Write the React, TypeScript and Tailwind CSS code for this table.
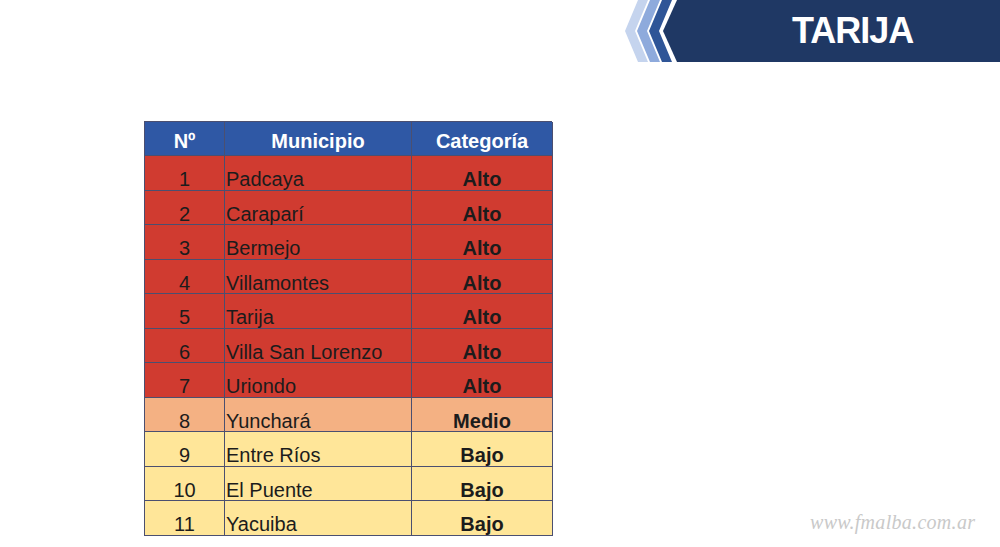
import React from "react";

type Row = { n: number; name: string; cat: string; tone: "alto" | "medio" | "bajo" };

const ROWS: Row[] = [
  { n: 1, name: "Padcaya", cat: "Alto", tone: "alto" },
  { n: 2, name: "Caraparí", cat: "Alto", tone: "alto" },
  { n: 3, name: "Bermejo", cat: "Alto", tone: "alto" },
  { n: 4, name: "Villamontes", cat: "Alto", tone: "alto" },
  { n: 5, name: "Tarija", cat: "Alto", tone: "alto" },
  { n: 6, name: "Villa San Lorenzo", cat: "Alto", tone: "alto" },
  { n: 7, name: "Uriondo", cat: "Alto", tone: "alto" },
  { n: 8, name: "Yunchará", cat: "Medio", tone: "medio" },
  { n: 9, name: "Entre Ríos", cat: "Bajo", tone: "bajo" },
  { n: 10, name: "El Puente", cat: "Bajo", tone: "bajo" },
  { n: 11, name: "Yacuiba", cat: "Bajo", tone: "bajo" },
];

const toneBg = {
  alto: "bg-[#d03b30]",
  medio: "bg-[#f4b183]",
  bajo: "bg-[#ffe699]",
};

function Banner() {
  return (
    <div className="relative h-[63px] w-[375px]">
      <svg className="absolute inset-0" width="375" height="63" viewBox="0 0 375 63">
        <polygon points="13,0 23,0 10,31 23,62 13,62 0,31" fill="#c5d4ee" />
        <polygon points="25,0 35,0 22,31 35,62 25,62 12,31" fill="#8eaadc" />
        <polygon points="37,0 47,0 34,31 47,62 37,62 24,31" fill="#2f5597" />
        <polygon points="52,0 375,0 375,62 52,62 38,31" fill="#1f3864" />
      </svg>
      <div className="relative flex h-[62px] items-center pl-[167px]">
        <span className="font-['Liberation_Sans',Arial,sans-serif] text-[36px] font-bold leading-none tracking-[-1px] text-white">
          TARIJA
        </span>
      </div>
    </div>
  );
}

function Cell({
  children,
  className = "",
}: {
  children: React.ReactNode;
  className?: string;
}) {
  return (
    <div className={`h-[34.5px] border-b border-r border-[#4b4f70] pt-[13px] leading-[20px] whitespace-nowrap ${className}`}>
      {children}
    </div>
  );
}

export default function App() {
  return (
    <div className="relative h-[547px] w-[1000px] overflow-hidden bg-white font-['Liberation_Sans',Arial,sans-serif] text-[20px] text-[#1c1c1c]">
      <header className="flex justify-end">
        <Banner />
      </header>

      <div className="flex items-end">
        <div className="ml-[144px] mt-[58px] grid w-[408px] grid-cols-[80px_187px_141px] border-l border-t border-[#4b4f70]">
          {["Nº", "Municipio", "Categoría"].map((h) => (
            <div
              key={h}
              className="h-[34px] border-b border-r border-[#4b4f70] bg-[#2f58a5] pt-[9px] text-center font-bold leading-[20px] text-white"
            >
              {h}
            </div>
          ))}
          {ROWS.map((r) => (
            <React.Fragment key={r.n}>
              <Cell className={`${toneBg[r.tone]} text-center`}>{r.n}</Cell>
              <Cell className={`${toneBg[r.tone]} pl-[1px]`}>{r.name}</Cell>
              <Cell className={`${toneBg[r.tone]} text-center font-bold`}>{r.cat}</Cell>
            </React.Fragment>
          ))}
        </div>
        <div className="ml-[258px] pb-[4px] font-['Liberation_Serif',serif] text-[20px] italic leading-none tracking-[0.3px] text-[#c9c9c9]">
          www.fmalba.com.ar
        </div>
      </div>
    </div>
  );
}
